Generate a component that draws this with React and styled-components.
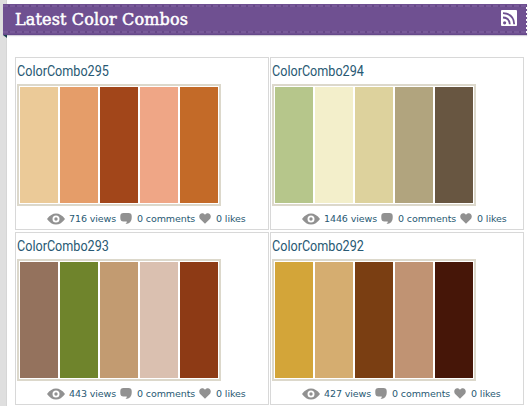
import React from "react";
import styled, { createGlobalStyle } from "styled-components";

const combos = [
  {
    name: "ColorCombo295",
    views: 716,
    colors: ["#ebca98", "#e59d69", "#a2461a", "#efa686", "#c36a28"],
  },
  {
    name: "ColorCombo294",
    views: 1446,
    colors: ["#b6c68b", "#f3efcb", "#ddd29d", "#b1a47e", "#685641"],
  },
  {
    name: "ColorCombo293",
    views: 443,
    colors: ["#94725d", "#6f842c", "#c29b71", "#dac0b0", "#8d3a15"],
  },
  {
    name: "ColorCombo292",
    views: 427,
    colors: ["#d3a539", "#d5ad70", "#7a3e12", "#c09373", "#461608"],
  },
];

const GlobalStyle = createGlobalStyle`
  * {
    box-sizing: border-box;
  }

  body {
    margin: 0;
    overflow: hidden;
    background: #dedede;
  }
`;

const Page = styled.div`
  height: 406px;
  padding: 4px 4px 0 3px;
  background: linear-gradient(90deg, #dfdfdf 6px, #d6d6d6 6px, #d6d6d6 7px, #fff 7px);
  overflow: hidden;
`;

const Ribbon = styled.header`
  position: relative;
  display: flex;
  align-items: center;
  justify-content: space-between;
  height: 31px;
  padding: 0 10px 0 12px;
  background: #6f5091;
  border-bottom: 1px solid #65498a;
  box-shadow: 0 1px 1px #d5d0da;

  /* stitched seams */
  &::before,
  &::after {
    content: "";
    position: absolute;
    left: 0;
    right: 0;
    height: 2px;
    background: repeating-linear-gradient(90deg, #785a99 0 5px, #664887 5px 7px);
  }

  &::before {
    top: 1px;
  }

  &::after {
    bottom: 1px;
  }
`;

const Fold = styled.span`
  position: absolute;
  top: 31px;
  left: 0;
  border-top: 3px solid #173f4c;
  border-left: 4px solid transparent;
`;

const TornEdge = styled.span`
  position: absolute;
  z-index: 1;
  top: 3px;
  right: 0;
  bottom: 0;
  width: 1px;
  background: repeating-linear-gradient(#fff 0 2px, #6f5091 2px 4px);
`;

const Heading = styled.h2`
  margin: 2px 0 0;
  font: 400 16px/30px "DejaVu Serif", serif;
  letter-spacing: 0.15px;
  color: #fff;
  -webkit-text-stroke: 0.5px #fff;
`;

const RssIcon = styled.svg`
  display: block;
  margin-top: -3px;
`;

const Grid = styled.main`
  display: grid;
  grid-template-columns: 254px 254px;
  gap: 2px 1px;
  padding: 22px 0 0 12px;
`;

const Card = styled.article`
  height: 173px;
  padding: 4px 1px 0;
  border: 1px solid #d8d8d8;
  background: #fff;
`;

const Title = styled.h3`
  margin: 0;
  height: 22px;
  font: 400 14px/19px Roboto, sans-serif;
  color: #285973;
  transform: scaleX(0.9);
  transform-origin: left;
`;

const Palette = styled.div`
  display: flex;
  gap: 2px;
  width: 204px;
  height: 122px;
  padding: 1px;
  border: 2px solid #dcd8cb;
`;

const Swatch = styled.span`
  flex: 1;
  background: ${({ $color }) => $color};
`;

const Stats = styled.div`
  display: flex;
  align-items: center;
  height: 25px;
  padding-left: 30px;
  font: 400 9.5px/14px "DejaVu Sans", sans-serif;
  letter-spacing: -0.1px;
  white-space: nowrap;
  color: #285973;

  svg {
    flex: none;
    fill: #919191;
  }
`;

const Stat = styled.span`
  display: flex;
  align-items: center;
  width: ${({ $width }) => $width}px;
  gap: ${({ $gap }) => $gap}px;
`;

function Eye() {
  return (
    <svg width="18" height="12" viewBox="0 0 18 12">
      <path
        fillRule="evenodd"
        d="M0 6Q4 .5 9 .5T18 6Q14 11.5 9 11.5T0 6ZM9 2.5A3.5 3.5 0 1 0 9 9.5A3.5 3.5 0 1 0 9 2.5ZM9 4.3A1.7 1.7 0 1 1 9 7.7A1.7 1.7 0 1 1 9 4.3Z"
      />
    </svg>
  );
}

function Bubble() {
  return (
    <svg width="12" height="11" viewBox="0 0 12 11">
      <path d="M3.5 0H8.5Q11.7 0 11.7 3V5Q11.7 10.5 5.5 11Q7 9.8 6.8 8.6H3.5Q.3 8.6 .3 5V3Q.3 0 3.5 0Z" />
    </svg>
  );
}

function Heart() {
  return (
    <svg width="12" height="11" viewBox="0 0 12 11">
      <path d="M6 10.8L.9 5.7C-1.4 2 2.7-1.8 6 1.8C9.3-1.8 13.4 2 11.1 5.7Z" />
    </svg>
  );
}

function ComboCard({ combo }) {
  return (
    <Card>
      <Title>{combo.name}</Title>
      <Palette>
        {combo.colors.map((color) => (
          <Swatch key={color} $color={color} />
        ))}
      </Palette>
      <Stats>
        <Stat $width={combo.views > 999 ? 79 : 73} $gap={4}>
          <Eye />
          {combo.views} views
        </Stat>
        <Stat $width={79} $gap={5}>
          <Bubble />0 comments
        </Stat>
        <Stat $gap={5}>
          <Heart />0 likes
        </Stat>
      </Stats>
    </Card>
  );
}

function App() {
  return (
    <>
      <GlobalStyle />
      <Page>
        <Ribbon>
          <Heading>Latest Color Combos</Heading>
          <RssIcon width="16" height="16" viewBox="0 0 16 16">
            <rect width="16" height="16" rx="1" fill="#fff" />
            <circle cx="3.6" cy="12.8" r="1.6" fill="#6f5091" />
            <path
              d="M2 7.5Q8.5 7.8 8.8 14.3M2 3.2Q12.8 3.6 13.2 14.3"
              fill="none"
              stroke="#6f5091"
              strokeWidth="1.8"
            />
          </RssIcon>
          <Fold />
          <TornEdge />
        </Ribbon>
        <Grid>
          {combos.map((combo) => (
            <ComboCard key={combo.name} combo={combo} />
          ))}
        </Grid>
      </Page>
    </>
  );
}

export default App;
